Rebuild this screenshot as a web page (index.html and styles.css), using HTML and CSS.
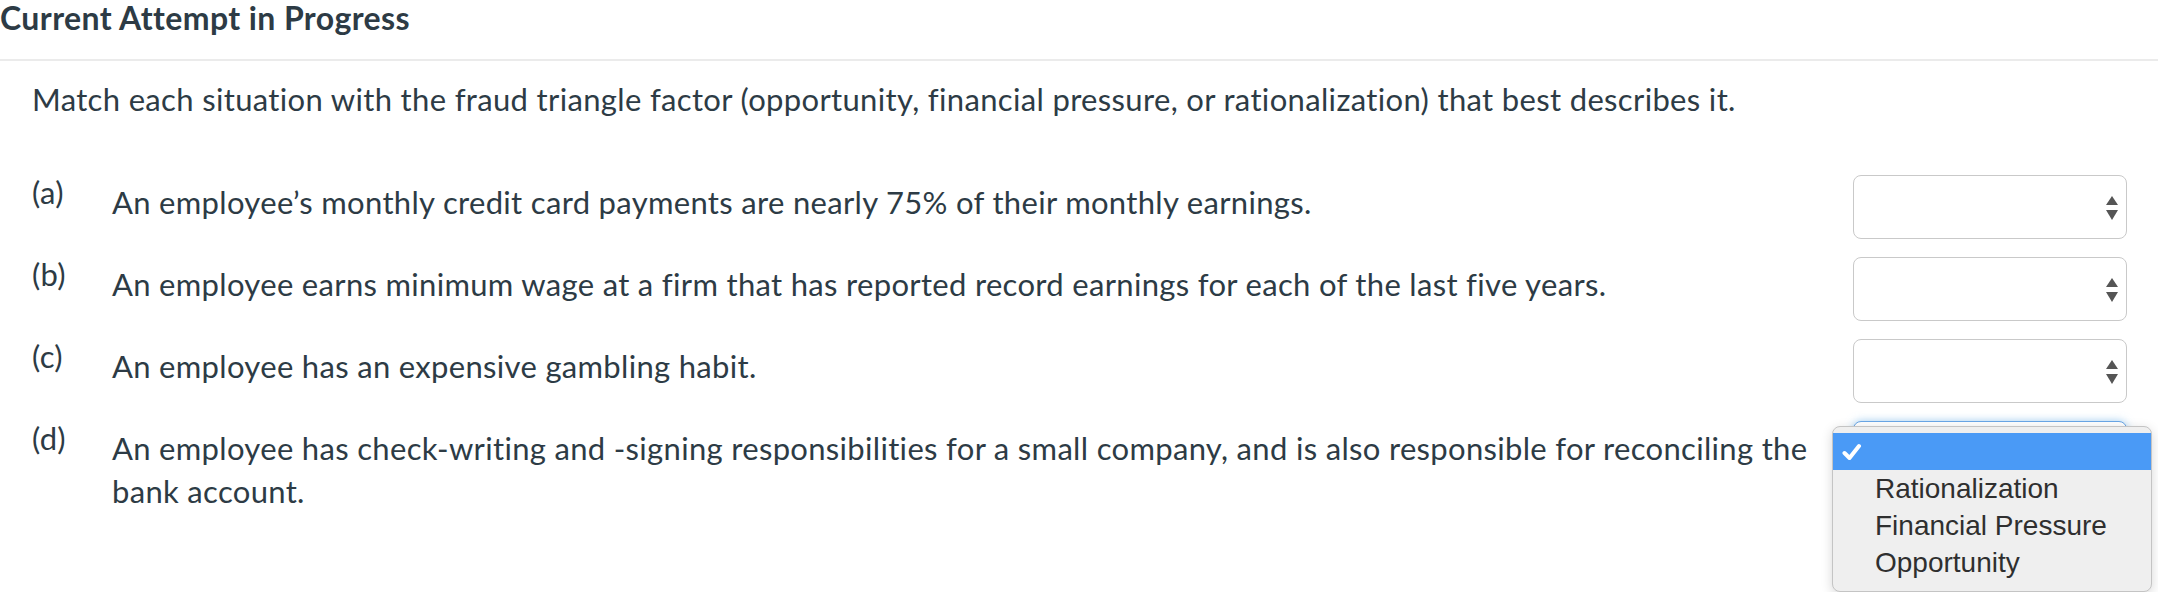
FILE: index.html
```html
<!DOCTYPE html>
<html lang="en">
<head>
<meta charset="utf-8">
<title>Current Attempt in Progress</title>
<link rel="stylesheet" href="styles.css">
</head>
<body>
<div class="page">
  <h1 class="title">Current Attempt in Progress</h1>
  <div class="divider"></div>
  <p class="prompt">Match each situation with the fraud triangle factor (opportunity, financial pressure, or rationalization) that best describes it.</p>
  <div class="rows">
    <div class="row">
      <div class="label">(a)</div>
      <div class="text">An employee’s monthly credit card payments are nearly 75% of their monthly earnings.</div>
      <div class="select-wrap">
        <div class="select">
          <svg class="arrows" width="12" height="24" viewBox="0 0 12 24"><polygon points="6,0 12,9 0,9" fill="#555"/><polygon points="0,14 12,14 6,24" fill="#555"/></svg>
        </div>
      </div>
    </div>
    <div class="row">
      <div class="label">(b)</div>
      <div class="text">An employee earns minimum wage at a firm that has reported record earnings for each of the last five years.</div>
      <div class="select-wrap">
        <div class="select">
          <svg class="arrows" width="12" height="24" viewBox="0 0 12 24"><polygon points="6,0 12,9 0,9" fill="#555"/><polygon points="0,14 12,14 6,24" fill="#555"/></svg>
        </div>
      </div>
    </div>
    <div class="row">
      <div class="label">(c)</div>
      <div class="text">An employee has an expensive gambling habit.</div>
      <div class="select-wrap">
        <div class="select">
          <svg class="arrows" width="12" height="24" viewBox="0 0 12 24"><polygon points="6,0 12,9 0,9" fill="#555"/><polygon points="0,14 12,14 6,24" fill="#555"/></svg>
        </div>
      </div>
    </div>
    <div class="row">
      <div class="label">(d)</div>
      <div class="text">An employee has check-writing and -signing responsibilities for a small company, and is also responsible for reconciling the bank account.</div>
      <div class="select-wrap">
        <div class="select focused">
          <svg class="arrows" width="12" height="24" viewBox="0 0 12 24"><polygon points="6,0 12,9 0,9" fill="#555"/><polygon points="0,14 12,14 6,24" fill="#555"/></svg>
        </div>
        <div class="menu">
          <div class="option selected">
            <svg class="check" width="20" height="18" viewBox="0 0 20 18"><path d="M2.5 10 L7.5 15 L17 3" fill="none" stroke="#fff" stroke-width="4" stroke-linecap="round" stroke-linejoin="round"/></svg>
          </div>
          <div class="option">Rationalization</div>
          <div class="option">Financial Pressure</div>
          <div class="option">Opportunity</div>
        </div>
      </div>
    </div>
  </div>
</div>
</body>
</html>
```
FILE: styles.css
```css
html, body {
  margin: 0;
  padding: 0;
  background: #fff;
  overflow: hidden;
}

body {
  font-family: Lato, "Open Sans", sans-serif;
  color: #2d3b45;
}

.page {
  width: 2158px;
  height: 592px;
  position: relative;
}

.title {
  margin: 0;
  font-size: 32px;
  line-height: 36px;
  letter-spacing: 0.4px;
  font-weight: 700;
  height: 36px;
}

.divider {
  margin-top: 23px;
  height: 2px;
  background: #ebebeb;
}

.prompt {
  margin: 20px 0 0 32px;
  font-size: 31px;
  line-height: 36px;
  letter-spacing: 0.34px;
}

.rows {
  margin-top: 58px;
  padding: 0 31px 0 32px;
  display: flex;
  flex-direction: column;
  gap: 18px;
}

.row {
  display: flex;
  align-items: flex-start;
}

.label {
  width: 80px;
  flex: none;
  font-size: 31px;
  line-height: 32px;
  padding-top: 1px;
  letter-spacing: 0.3px;
}

.text {
  flex: 1;
  font-size: 31px;
  line-height: 43px;
  letter-spacing: 0.32px;
  padding-top: 6px;
  padding-right: 30px;
}

.select-wrap {
  position: relative;
  flex: none;
  width: 274px;
  height: 64px;
}

.select {
  box-sizing: border-box;
  width: 274px;
  height: 64px;
  border: 1px solid #c9c9c9;
  border-radius: 8px;
  background: #fff;
  display: flex;
  align-items: center;
  justify-content: flex-end;
  padding-right: 8px;
}

.select.focused {
  border-color: #6aa6e6;
  box-shadow: 0 0 8px rgba(102, 175, 233, 0.6);
}

.arrows {
  display: block;
  margin-top: 2px;
}

.menu {
  position: absolute;
  left: -21px;
  top: 5px;
  width: 320px;
  height: 166px;
  box-sizing: border-box;
  background: #efefef;
  border: 1px solid #c4c4c4;
  border-radius: 8px;
  box-shadow: 0 3px 12px rgba(0, 0, 0, 0.16);
  padding-top: 6px;
  font-family: "Liberation Sans", Arial, sans-serif;
  font-size: 28px;
  color: #2f2f2f;
  z-index: 2;
}

.option {
  height: 37px;
  line-height: 37px;
  padding-left: 42px;
  white-space: nowrap;
}

.option.selected {
  background: #4a9af6;
  padding-left: 9px;
  display: flex;
  align-items: center;
}

.check {
  display: block;
}
```
